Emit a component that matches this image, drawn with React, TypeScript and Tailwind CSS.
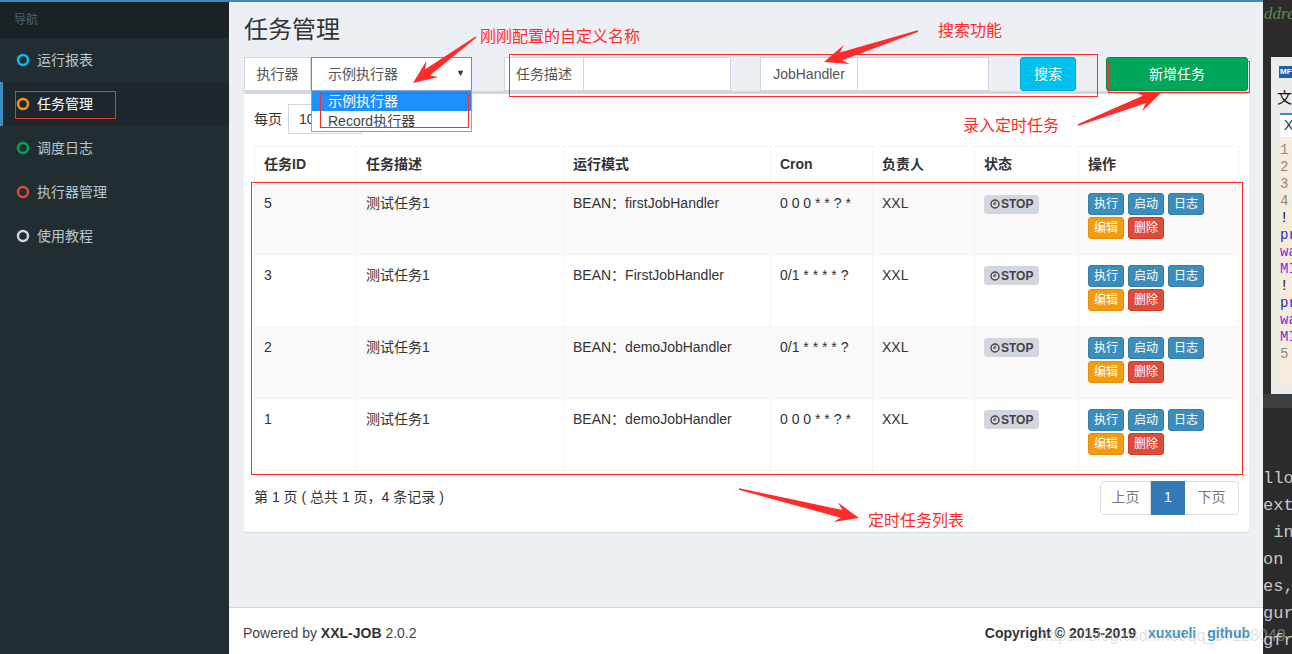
import React from "react";

const menu = [
  { label: "运行报表", color: "#00c0ef" },
  { label: "任务管理", color: "#f39c12", active: true },
  { label: "调度日志", color: "#00a65a" },
  { label: "执行器管理", color: "#dd4b39" },
  { label: "使用教程", color: "#d2d6de" },
];

const jobs = [
  { id: 5, mode: "BEAN：firstJobHandler", cron: "0 0 0 * * ? *" },
  { id: 3, mode: "BEAN：FirstJobHandler", cron: "0/1 * * * * ?" },
  { id: 2, mode: "BEAN：demoJobHandler", cron: "0/1 * * * * ?" },
  { id: 1, mode: "BEAN：demoJobHandler", cron: "0 0 0 * * ? *" },
];

const editorLines = [
  { t: "1", cls: "text-[#8a8a8a]" },
  { t: "2", cls: "text-[#8a8a8a]" },
  { t: "3", cls: "text-[#8a8a8a]" },
  { t: "4", cls: "text-[#8a8a8a]" },
  { t: "!", cls: "text-[#111]" },
  { t: "pr", cls: "text-[#2a2ad0]" },
  { t: "wa", cls: "text-[#7a2ad0]" },
  { t: "MI", cls: "text-[#7a2ad0]" },
  { t: "!", cls: "text-[#111]" },
  { t: "pr", cls: "text-[#2a2ad0]" },
  { t: "wa", cls: "text-[#7a2ad0]" },
  { t: "MI", cls: "text-[#7a2ad0]" },
  { t: "5", cls: "text-[#8a8a8a]" },
];

const consoleLines = ["llow", "ext", " in", "on :", "es,", "gura", "gfra"];

// tapered "snipping tool" arrow, tail -> tip
function arrowPoints(x1: number, y1: number, x2: number, y2: number) {
  const dx = x2 - x1;
  const dy = y2 - y1;
  const len = Math.hypot(dx, dy);
  const ux = dx / len;
  const uy = dy / len;
  const nx = -uy;
  const ny = ux;
  const hl = 24;
  const hw = 10;
  const sw = 4;
  const bx = x2 - ux * hl;
  const by = y2 - uy * hl;
  const kx = x2 - ux * (hl - 6);
  const ky = y2 - uy * (hl - 6);
  const pts = [
    [x1 + nx * 0.8, y1 + ny * 0.8],
    [kx + nx * sw, ky + ny * sw],
    [bx + nx * hw, by + ny * hw],
    [x2, y2],
    [bx - nx * hw, by - ny * hw],
    [kx - nx * sw, ky - ny * sw],
    [x1 - nx * 0.8, y1 - ny * 0.8],
  ];
  return pts.map((p) => p.map((v) => v.toFixed(1)).join(",")).join(" ");
}

function Ring({ color }: { color: string }) {
  return (
    <svg width="14" height="14" viewBox="0 0 14 14">
      <circle cx="7" cy="7" r="5" fill="none" stroke={color} strokeWidth="2.4" />
    </svg>
  );
}

function Sidebar() {
  return (
    <aside className="w-[229px] shrink-0 bg-[#222d32] flex flex-col">
      <div className="h-[36px] bg-[#1a2226] px-[14px] text-[12px] leading-[36px] text-[#4b646f]">导航</div>
      {menu.map((m) =>
        m.active ? (
          <div key={m.label} className="h-[44px] flex items-center gap-[7px] bg-[#1e282c] border-l-[3px] border-[#3c8dbc] pl-[13px] text-[14px] text-white">
            <Ring color={m.color} />
            <span>{m.label}</span>
          </div>
        ) : (
          <div key={m.label} className="h-[44px] flex items-center gap-[7px] pl-[16px] text-[14px] text-[#b8c7ce]">
            <Ring color={m.color} />
            <span>{m.label}</span>
          </div>
        )
      )}
    </aside>
  );
}

function FilterBar() {
  return (
    <div className="mt-[14px] flex h-[34px] text-[14px] text-[#555]">
      <div className="flex">
        <div className="w-[67px] flex items-center justify-center bg-white border border-[#d2d6de]">执行器</div>
        <div className="relative w-[161px]">
          <div className="h-full flex items-center justify-between bg-white border border-[#5a8fd0] pl-[16px] pr-[6px]">
            <span>示例执行器</span>
            <span className="text-[9px] text-[#333]">▼</span>
          </div>
          <div className="absolute left-0 top-[33px] w-full z-10 bg-white border border-[#7ea6d6] text-[14px] leading-[20px]">
            <div className="h-[20px] bg-[#1e90ff] text-white pl-[16px]">示例执行器</div>
            <div className="h-[20px] text-[#444] pl-[16px]">Record执行器</div>
          </div>
        </div>
      </div>
      <div className="ml-[32px] flex">
        <div className="w-[80px] flex items-center justify-center bg-white border border-[#d2d6de]">任务描述</div>
        <div className="w-[147px] bg-white border border-l-0 border-[#d2d6de]" />
      </div>
      <div className="ml-[29px] flex">
        <div className="w-[98px] flex items-center justify-center bg-white border border-[#d2d6de]">JobHandler</div>
        <div className="w-[131px] bg-white border border-l-0 border-[#d2d6de]" />
      </div>
      <button className="ml-[31px] w-[56px] rounded-[3px] bg-[#00c0ef] border border-[#00acd6] text-white">搜索</button>
      <button className="ml-[30px] w-[142px] rounded-[3px] bg-[#00a65a] border border-[#008d4c] text-white">新增任务</button>
    </div>
  );
}

function StopBadge() {
  return (
    <span className="inline-flex items-center gap-[1px] h-[19px] px-[6px] rounded-[3px] bg-[#d2d6de] text-[12px] font-bold text-[#444]">
      <svg width="10" height="10" viewBox="0 0 10 10">
        <circle cx="5" cy="5" r="4" fill="none" stroke="#444" strokeWidth="1.4" />
        <path d="M5 2.6V5.2H3.2" fill="none" stroke="#444" strokeWidth="1.2" />
      </svg>
      STOP
    </span>
  );
}

function Actions() {
  return (
    <div className="flex flex-col gap-[2px] text-[12px] leading-[20px] text-white">
      <div className="flex gap-[4px]">
        <span className="w-[36px] text-center rounded-[3px] bg-[#3c8dbc] border border-[#367fa9]">执行</span>
        <span className="w-[36px] text-center rounded-[3px] bg-[#3c8dbc] border border-[#367fa9]">启动</span>
        <span className="w-[36px] text-center rounded-[3px] bg-[#3c8dbc] border border-[#367fa9]">日志</span>
      </div>
      <div className="flex gap-[4px]">
        <span className="w-[36px] text-center rounded-[3px] bg-[#f39c12] border border-[#e08e0b]">编辑</span>
        <span className="w-[36px] text-center rounded-[3px] bg-[#dd4b39] border border-[#d73925]">删除</span>
      </div>
    </div>
  );
}

function JobBox() {
  return (
    <div className="bg-white border-t-[3px] border-[#d2d6de] rounded-[3px] shadow-[0_1px_1px_rgba(0,0,0,0.1)] px-[10px] pt-[10px] pb-[17px] text-[14px] text-[#333]">
      <div className="h-[30px] flex items-center gap-[6px]">
        <span>每页</span>
        <div className="w-[74px] h-[30px] border border-[#d2d6de] pl-[10px] leading-[28px]">10</div>
        <span>条记录</span>
      </div>
      <table className="mt-[12px] w-[984px] table-fixed border-collapse">
        <colgroup>
          <col className="w-[102px]" />
          <col className="w-[207px]" />
          <col className="w-[207px]" />
          <col className="w-[102px]" />
          <col className="w-[102px]" />
          <col className="w-[104px]" />
          <col className="w-[160px]" />
        </colgroup>
        <thead>
          <tr className="text-left font-bold leading-[20px]">
            {["任务ID", "任务描述", "运行模式", "Cron", "负责人", "状态", "操作"].map((h) => (
              <th key={h} className="px-[9px] py-[7px] border border-b-2 border-[#f4f4f4]">{h}</th>
            ))}
          </tr>
        </thead>
        <tbody>
          {jobs.map((j, i) => (
            <tr key={j.id} className={i % 2 === 0 ? "h-[72px] bg-[#f9f9f9] align-top leading-[20px]" : "h-[72px] bg-white align-top leading-[20px]"}>
              <td className="px-[9px] pt-[10px] border border-[#f4f4f4]">{j.id}</td>
              <td className="px-[9px] pt-[10px] border border-[#f4f4f4]">测试任务1</td>
              <td className="px-[9px] pt-[10px] border border-[#f4f4f4]">{j.mode}</td>
              <td className="px-[9px] pt-[10px] border border-[#f4f4f4]">{j.cron}</td>
              <td className="px-[9px] pt-[10px] border border-[#f4f4f4]">XXL</td>
              <td className="px-[9px] pt-[11px] border border-[#f4f4f4]"><StopBadge /></td>
              <td className="px-[9px] pt-[10px] border border-[#f4f4f4]"><Actions /></td>
            </tr>
          ))}
        </tbody>
      </table>
      <div className="mt-[10px] flex items-center justify-between">
        <span>第 1 页 ( 总共 1 页，4 条记录 )</span>
        <div className="flex h-[34px] text-[14px]">
          <span className="w-[51px] flex items-center justify-center border border-[#ddd] rounded-l-[4px] text-[#777]">上页</span>
          <span className="w-[34px] flex items-center justify-center bg-[#337ab7] border border-[#337ab7] text-white">1</span>
          <span className="w-[54px] flex items-center justify-center border border-l-0 border-[#ddd] rounded-r-[4px] text-[#777]">下页</span>
        </div>
      </div>
    </div>
  );
}

function EditorStrip() {
  return (
    <div className="w-[29px] shrink-0 bg-[#2b2b2b] flex flex-col overflow-hidden">
      <div className="h-[58px] pl-[1px] pt-[1px] font-['Liberation_Serif',serif] italic text-[17px] text-[#6a8759] whitespace-nowrap">ddre</div>
      <div className="ml-[8px] h-[342px] bg-[#ececec] flex flex-col">
        <div className="h-[30px] flex items-center pl-[8px]">
          <span className="h-[12px] w-[14px] bg-[#1f5fa6] text-[8px] leading-[12px] font-bold text-white pl-[1px]">MF</span>
        </div>
        <div className="h-[22px] pl-[6px] text-[15px] leading-[22px] text-[#111]">文</div>
        <div className="h-[28px] pt-[4px] pl-[9px]">
          <div className="h-full bg-white border-t-2 border-[#3c8dbc] pl-[4px] text-[14px] text-[#333]">X</div>
        </div>
        <div className="ml-[6px] flex-1 bg-[#f7ecdc] pt-[5px] font-['Liberation_Mono',monospace] text-[14px] leading-[17px] whitespace-nowrap">
          {editorLines.map((l, i) => (
            <div key={i} className={"pl-[3px] " + l.cls}>{l.t}</div>
          ))}
        </div>
        <div className="h-[8px]" />
      </div>
      <div className="h-[14px] bg-[#3c3f41]" />
      <div className="pt-[57px] font-['Liberation_Mono',monospace] text-[17px] leading-[27px] text-[#c8c8c8] whitespace-pre">
        {consoleLines.map((l, i) => (
          <div key={i}>{l}</div>
        ))}
      </div>
    </div>
  );
}

export default function App() {
  const red = "#ff2b2b";
  return (
    <div className="relative w-[1292px] h-[654px] overflow-hidden flex font-['Liberation_Sans','Noto_Sans_CJK_SC',sans-serif]">
      <div className="w-[1263px] h-full flex border-t-2 border-r border-[#3c8dbc]">
        <Sidebar />
        <main className="flex-1 bg-[#ecf0f5] flex flex-col">
          <div className="px-[15px] pt-[15px]">
            <h1 className="text-[24px] leading-[26px] font-normal text-[#333]">任务管理</h1>
            <FilterBar />
            <JobBox />
          </div>
          <footer className="mt-auto h-[47px] bg-white border-t border-[#d2d6de] px-[14px] pt-[4px] flex items-center justify-between text-[14px] text-[#444]">
            <span>Powered by <b className="text-[#333]">XXL-JOB</b> 2.0.2</span>
            <span className="flex font-bold text-[#333]">
              <span>Copyright © 2015-2019</span>
              <span className="ml-[12px] text-[#3c8dbc]">xuxueli</span>
              <span className="ml-[11px] text-[#3c8dbc]">github</span>
            </span>
          </footer>
        </main>
      </div>
      <EditorStrip />

      {/* annotations */}
      <div className="absolute left-[15px] top-[91px] w-[101px] h-[28px] border border-[#e53935]" />
      <div className="absolute left-[320px] top-[93px] w-[149px] h-[35px] border border-[#ff2b2b] z-20" />
      <div className="absolute left-[509px] top-[54px] w-[589px] h-[43px] border border-[#ff2b2b]" />
      <div className="absolute left-[1108px] top-[61px] w-[142px] h-[32px] border border-[#ff2b2b]" />
      <div className="absolute left-[251px] top-[182px] w-[992px] h-[293px] border border-[#ff2b2b]" />
      <span className="absolute left-[480px] top-[26px] text-[16px] leading-[22px] text-[#ff2b2b]">刚刚配置的自定义名称</span>
      <span className="absolute left-[938px] top-[20px] text-[16px] leading-[22px] text-[#ff2b2b]">搜索功能</span>
      <span className="absolute left-[963px] top-[115px] text-[16px] leading-[22px] text-[#ff2b2b]">录入定时任务</span>
      <span className="absolute left-[868px] top-[510px] text-[16px] leading-[22px] text-[#ff2b2b]">定时任务列表</span>
      <svg className="absolute left-0 top-0 pointer-events-none z-20" width="1292" height="654">
        <polygon points={arrowPoints(476, 37, 413, 83)} fill={red} />
        <polygon points={arrowPoints(918, 31, 824, 62)} fill={red} />
        <polygon points={arrowPoints(1078, 125, 1161, 93)} fill={red} />
        <polygon points={arrowPoints(739, 489, 859, 518)} fill={red} />
      </svg>
      <span className="absolute left-[1040px] top-[624px] text-[16px] text-[#c4c4c4]/50 whitespace-nowrap">https://blog.csdn.net/qq_37128049</span>
    </div>
  );
}
